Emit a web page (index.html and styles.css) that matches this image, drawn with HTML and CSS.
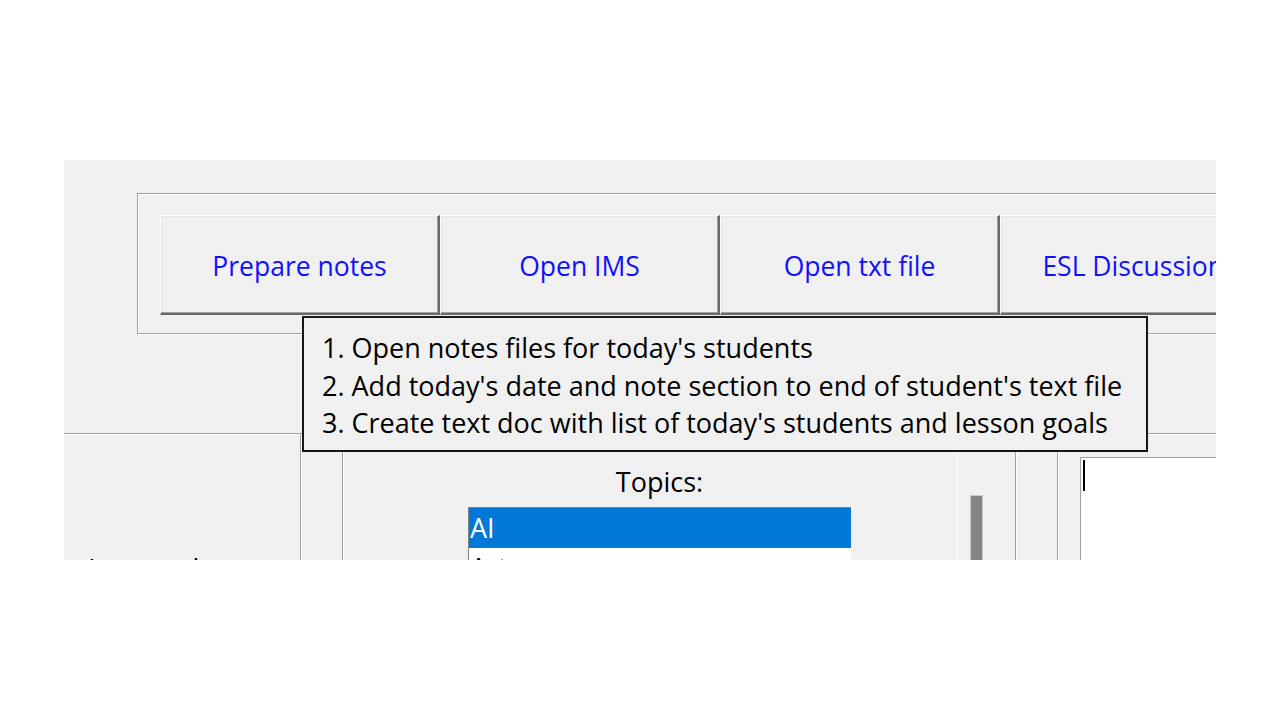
FILE: index.html
```html
<!DOCTYPE html>
<html>
<head>
<meta charset="utf-8">
<link rel="stylesheet" href="styles.css">
</head>
<body>
<div class="window">
  <div class="top">
    <div class="group">
      <div class="btn">Prepare notes</div>
      <div class="btn">Open IMS</div>
      <div class="btn">Open txt file</div>
      <div class="btn">ESL Discussions</div>
    </div>
  </div>
  <div class="lower">
    <div class="col col-a"><div class="side-label">Lesson date:</div></div>
    <div class="sep"></div>
    <div class="col col-b"></div>
    <div class="sep"></div>
    <div class="col col-c">
      <div class="topics">
        <div class="topics-label">Topics:</div>
        <div class="listbox">
          <div class="item selected">AI</div>
          <div class="item">Art</div>
        </div>
      </div>
    </div>
    <div class="light-line"></div>
    <div class="col col-d"><div class="thumb"></div></div>
    <div class="sep"></div>
    <div class="col col-e"></div>
    <div class="sep"></div>
    <div class="col col-f">
      <div class="textbox"><div class="caret"></div></div>
    </div>
  </div>
  <div class="tooltip">
    <div class="tip-line">1. Open notes files for today's students</div>
    <div class="tip-line">2. Add today's date and note section to end of student's text file</div>
    <div class="tip-line">3. Create text doc with list of today's students and lesson goals</div>
  </div>
</div>
</body>
</html>
```
FILE: styles.css
```css
html, body {
  margin: 0;
  padding: 0;
  background: #ffffff;
}

body {
  width: 1280px;
  height: 720px;
  overflow: hidden;
  font-family: "Open Sans", "Noto Sans", sans-serif;
}

.window {
  position: relative;
  margin: 160px 0 0 64px;
  width: 1152px;
  height: 400px;
  background: #f0f0f0;
  overflow: hidden;
}

.top {
  padding: 33px 0 0 73px;
}

.group {
  display: flex;
  width: 1200px;
  padding: 21px 0 18px 22px;
  border: 1px solid #a0a0a0;
  box-shadow: inset 1px 1px 0 #ffffff, 1px 1px 0 #ffffff;
}

.btn {
  flex: 0 0 auto;
  box-sizing: border-box;
  width: 280px;
  height: 100px;
  display: flex;
  align-items: center;
  justify-content: center;
  background: #f0f0f0;
  border-top: 1px solid #ffffff;
  border-left: 1px solid #ffffff;
  border-right: 2px solid #696969;
  border-bottom: 2px solid #696969;
  box-shadow: inset -1px -1px 0 #a0a0a0, inset 1px 1px 0 #e3e3e3;
  color: #1010ff;
  font-size: 26.5px;
  padding-top: 3px;
  white-space: nowrap;
}

.lower {
  display: flex;
  margin-top: 99px;
  height: 200px;
  border-top: 1px solid #a0a0a0;
  box-shadow: inset 0 1px 0 #ffffff;
}

.col {
  flex: 0 0 auto;
}

.col-a { width: 236px; }
.col-b { width: 40px; }
.col-c { width: 613px; }
.col-d { width: 57px; }
.col-e { width: 40px; }
.col-f { flex: 1 1 auto; padding: 23px 0 0 21px; }

.sep {
  flex: 0 0 auto;
  width: 1px;
  background: #a0a0a0;
  border-right: 1px solid #ffffff;
}

.light-line {
  flex: 0 0 auto;
  width: 1px;
  background: #ffffff;
}

.side-label {
  padding: 116px 0 0 24px;
  font-size: 27px;
  line-height: 37px;
  color: #000;
}

.topics {
  margin-left: 124px;
  width: 383px;
}

.topics-label {
  padding-top: 29px;
  line-height: 38px;
  text-align: center;
  font-size: 27px;
  color: #000;
}

.listbox {
  margin-top: 6px;
  border: 1px solid #828282;
  border-right: none;
  background: #ffffff;
  height: 120px;
}

.item {
  height: 40px;
  line-height: 40px;
  padding-left: 1px;
  font-size: 27px;
  color: #000;
}

.item.selected {
  background: #0078d7;
  color: #ffffff;
}

.thumb {
  margin: 62px 0 0 13px;
  width: 11px;
  height: 120px;
  background: #858585;
  box-shadow: 0 0 0 1px #c8c8c8;
}

.textbox {
  height: 200px;
  background: #ffffff;
  border-top: 1px solid #a0a0a0;
  border-left: 1px solid #a0a0a0;
}

.caret {
  margin: 2px 0 0 2px;
  width: 2px;
  height: 31px;
  background: #000;
}

.tooltip {
  position: absolute;
  left: 238px;
  top: 156px;
  box-sizing: border-box;
  width: 846px;
  height: 136px;
  padding: 11px 0 0 18px;
  background: #f0f0f0;
  border: 2px solid #161616;
  color: #000;
}

.tip-line {
  font-size: 27px;
  line-height: 37.5px;
  white-space: nowrap;
}
```
